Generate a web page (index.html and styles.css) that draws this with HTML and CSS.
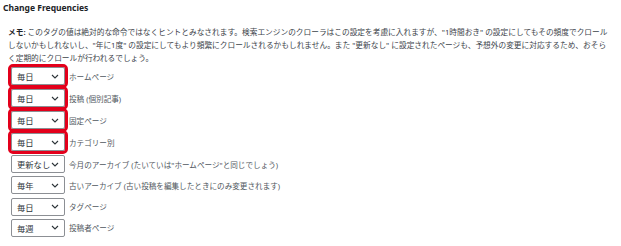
FILE: index.html
```html
<!DOCTYPE html>
<html lang="ja">
<head>
<meta charset="utf-8">
<link rel="stylesheet" href="styles.css">
</head>
<body>
<div class="page">
  <h3 class="title">Change Frequencies</h3>
  <p class="note"><b>メモ:</b> このタグの値は絶対的な命令ではなくヒントとみなされます。検索エンジンのクローラはこの設定を考慮に入れますが、"1時間おき" の設定にしてもその頻度でクロールしないかもしれないし、"年に1度" の設定にしてもより頻繁にクロールされるかもしれません。また "更新なし" に設定されたページも、予想外の変更に対応するため、おそらく定期的にクロールが行われるでしょう。</p>
  <div class="rows">
    <div class="row hl"><div class="sel"><span>毎日</span><svg width="8" height="5" viewBox="0 0 8 5"><path d="M1 1l3 3 3-3" fill="none" stroke="#2c3338" stroke-width="1.1"/></svg></div><span class="lbl">ホームページ</span></div>
    <div class="row hl"><div class="sel"><span>毎日</span><svg width="8" height="5" viewBox="0 0 8 5"><path d="M1 1l3 3 3-3" fill="none" stroke="#2c3338" stroke-width="1.1"/></svg></div><span class="lbl">投稿 (個別記事)</span></div>
    <div class="row hl"><div class="sel"><span>毎日</span><svg width="8" height="5" viewBox="0 0 8 5"><path d="M1 1l3 3 3-3" fill="none" stroke="#2c3338" stroke-width="1.1"/></svg></div><span class="lbl">固定ページ</span></div>
    <div class="row hl"><div class="sel"><span>毎日</span><svg width="8" height="5" viewBox="0 0 8 5"><path d="M1 1l3 3 3-3" fill="none" stroke="#2c3338" stroke-width="1.1"/></svg></div><span class="lbl">カテゴリー別</span></div>
    <div class="row"><div class="sel"><span>更新なし</span><svg width="8" height="5" viewBox="0 0 8 5"><path d="M1 1l3 3 3-3" fill="none" stroke="#2c3338" stroke-width="1.1"/></svg></div><span class="lbl">今月のアーカイブ (たいていは"ホームページ"と同じでしょう)</span></div>
    <div class="row"><div class="sel"><span>毎年</span><svg width="8" height="5" viewBox="0 0 8 5"><path d="M1 1l3 3 3-3" fill="none" stroke="#2c3338" stroke-width="1.1"/></svg></div><span class="lbl">古いアーカイブ (古い投稿を編集したときにのみ変更されます)</span></div>
    <div class="row"><div class="sel"><span>毎日</span><svg width="8" height="5" viewBox="0 0 8 5"><path d="M1 1l3 3 3-3" fill="none" stroke="#2c3338" stroke-width="1.1"/></svg></div><span class="lbl">タグページ</span></div>
    <div class="row"><div class="sel"><span>毎週</span><svg width="8" height="5" viewBox="0 0 8 5"><path d="M1 1l3 3 3-3" fill="none" stroke="#2c3338" stroke-width="1.1"/></svg></div><span class="lbl">投稿者ページ</span></div>
  </div>
</div>
</body>
</html>
```
FILE: styles.css
```css
html, body {
  margin: 0;
  padding: 0;
  background: #ffffff;
}
body {
  font-family: "Noto Sans", "Noto Sans CJK JP", sans-serif;
  color: #3c434a;
}
.page {
  padding: 2px 0 0 3px;
}
.title {
  margin: 0;
  font-size: 8.5px;
  line-height: 12px;
  font-weight: 700;
  color: #1d2327;
}
.note {
  margin: 11.5px 0 0 5px;
  font-size: 7.7px;
  line-height: 13.3px;
  color: #3c434a;
  width: 601px;
}
.note b {
  color: #1d2327;
}
.rows {
  margin-top: 0;
  margin-left: 8px;
  display: flex;
  flex-direction: column;
}
.row {
  display: flex;
  align-items: center;
  height: 21.3px;
}
.row.hl {
  height: 22px;
}
.sel {
  box-sizing: border-box;
  width: 54px;
  height: 18px;
  border: 1px solid #8c8f94;
  border-radius: 2px;
  background: #fff;
  display: flex;
  align-items: center;
  justify-content: space-between;
  padding: 0 5px 0 5px;
  font-size: 8.3px;
  color: #2c3338;
}
.row.hl .sel {
  outline: 3px solid #e3001b;
  outline-offset: 0;
}
.lbl {
  margin-left: 4px;
  font-size: 7.6px;
  color: #50575e;
}
```
